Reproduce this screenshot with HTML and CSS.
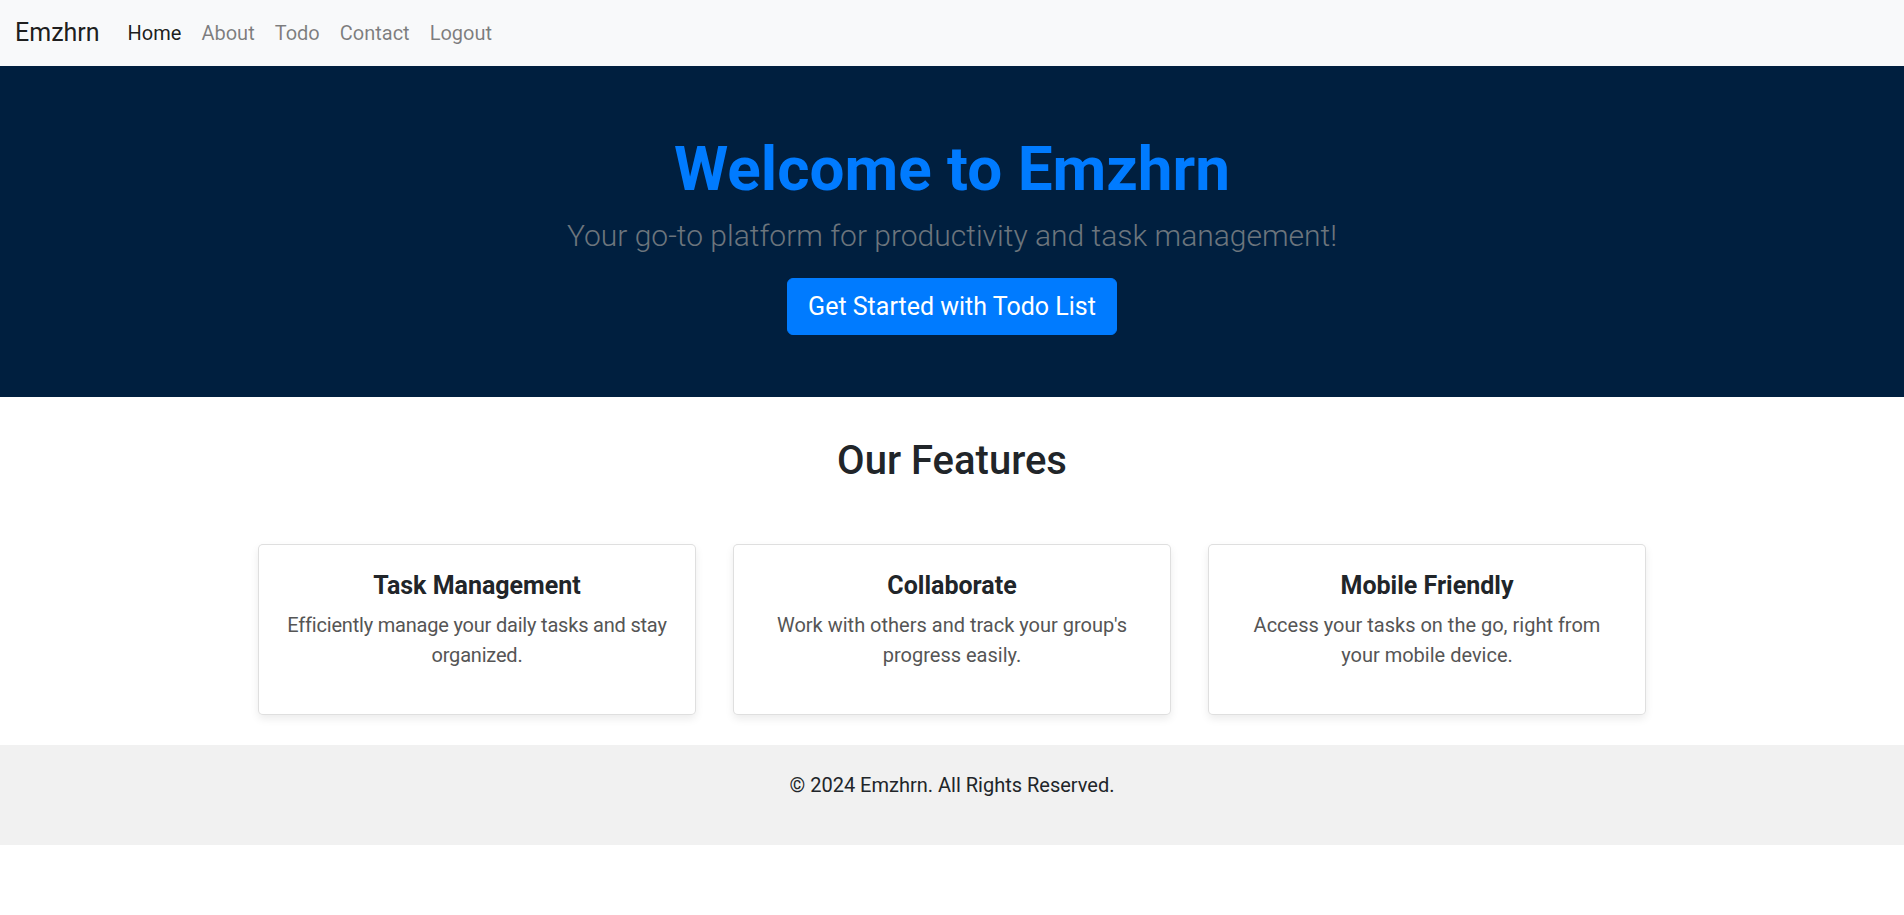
FILE: index.html
```html
<!DOCTYPE html>
<html lang="en">
<head>
<meta charset="utf-8">
<title>Emzhrn</title>
<link rel="stylesheet" href="styles.css">
</head>
<body>
<nav class="navbar">
  <a class="brand" href="#">Emzhrn</a>
  <ul class="nav">
    <li><a class="nav-link active" href="#">Home</a></li>
    <li><a class="nav-link" href="#">About</a></li>
    <li><a class="nav-link" href="#">Todo</a></li>
    <li><a class="nav-link" href="#">Contact</a></li>
    <li><a class="nav-link" href="#">Logout</a></li>
  </ul>
</nav>
<header class="hero">
  <h1 class="hero-title">Welcome to Emzhrn</h1>
  <p class="hero-lead">Your go-to platform for productivity and task management!</p>
  <a class="btn" href="#">Get Started with Todo List</a>
</header>
<section class="features">
  <h2 class="features-title">Our Features</h2>
  <div class="cards">
    <div class="card">
      <h3 class="card-title">Task Management</h3>
      <p class="card-text card-text-tight">Efficiently manage your daily tasks and stay organized.</p>
    </div>
    <div class="card">
      <h3 class="card-title">Collaborate</h3>
      <p class="card-text">Work with others and track your group's progress easily.</p>
    </div>
    <div class="card">
      <h3 class="card-title">Mobile Friendly</h3>
      <p class="card-text">Access your tasks on the go, right from your mobile device.</p>
    </div>
  </div>
</section>
<footer class="footer">
  <p class="footer-text">&copy; 2024 Emzhrn. All Rights Reserved.</p>
</footer>
</body>
</html>
```
FILE: styles.css
```css
* { box-sizing: border-box; }
html, body { margin: 0; padding: 0; }
body {
  font-family: Roboto, "Noto Sans", "Liberation Sans", sans-serif;
  font-size: 20px;
  line-height: 1.5;
  color: #212529;
  background: #fff;
}
a { text-decoration: none; }

.navbar {
  display: flex;
  align-items: center;
  height: 66px;
  padding: 0 15px;
  background: #f8f9fa;
}
.brand {
  font-size: 25px;
  line-height: 1.5;
  color: rgba(0,0,0,.9);
  margin-right: 18px;
}
.nav {
  display: flex;
  list-style: none;
  margin: 0;
  padding: 0;
}
.nav-link {
  display: block;
  padding: 10px 10px;
  color: rgba(0,0,0,.5);
}
.nav-link.active { color: rgba(0,0,0,.9); }

.hero {
  background: #001f3f;
  text-align: center;
  padding: 67px 20px 62px;
}
.hero-title {
  margin: 0 0 8px;
  font-size: 62px;
  line-height: 72px;
  font-weight: 700;
  color: #007bff;
}
.hero-lead {
  margin: 0 0 20px;
  font-size: 30px;
  line-height: 1.5;
  font-weight: 300;
  color: #6c757d;
}
.btn {
  display: inline-block;
  padding: 9px 20px 8px;
  font-size: 25px;
  line-height: 1.5;
  color: #fff;
  background: #007bff;
  border: 1px solid #007bff;
  border-radius: 6px;
}

.features {
  width: 1425px;
  margin: 0 auto;
  padding: 40px 18.75px 0;
  text-align: center;
}
.features-title {
  margin: 0 0 59px;
  font-size: 40px;
  line-height: 1.2;
  font-weight: 500;
}
.cards {
  display: grid;
  grid-template-columns: repeat(3, 1fr);
  gap: 37.5px;
}
.card {
  background: #fff;
  border: 1px solid rgba(0,0,0,.125);
  border-radius: 5px;
  box-shadow: 0 4px 8px rgba(0,0,0,.08);
  padding: 26px 25px 24px;
}
.card-title {
  margin: 0 0 9.4px;
  font-size: 25px;
  line-height: 1.2;
  font-weight: 700;
}
.card-text {
  margin: 0 0 20px;
  color: #555;
}
.card-text-tight { letter-spacing: -0.2px; }

.footer {
  margin-top: 30px;
  background: #f1f1f1;
  text-align: center;
  padding: 25px 20px;
}
.footer-text { margin: 0 0 20px; }
```
